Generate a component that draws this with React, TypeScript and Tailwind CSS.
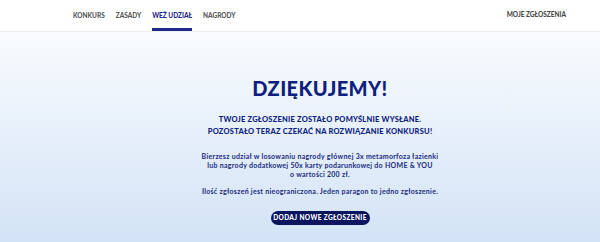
import React from 'react';

const navItems = [
  { label: 'KONKURS', active: false },
  { label: 'ZASADY', active: false },
  { label: 'WEŻ UDZIAŁ', active: true },
  { label: 'NAGRODY', active: false },
];

export default function App() {
  return (
    <div
      className="w-[600px] h-[242px] overflow-hidden flex flex-col bg-gradient-to-b from-white to-[#d3e3f6]"
      style={{ fontFamily: 'Lato, "Noto Sans", sans-serif' }}
    >
      {/* Top navigation */}
      <nav className="h-[32px] shrink-0 bg-white border-b border-[#eeeeee] flex items-stretch justify-between pl-[73px] pr-[34px]">
        <ul className="flex items-stretch gap-[11px]">
          {navItems.map((item) => (
            <li
              key={item.label}
              className={`flex items-center border-b-[3px] pt-[3px] text-[6.5px] font-black ${
                item.active ? 'border-[#1e2a8c] text-[#1e2a8c]' : 'border-transparent text-[#5a5a5a]'
              }`}
            >
              {item.label}
            </li>
          ))}
        </ul>
        <div className="flex items-center pb-[1px] text-[6.5px] font-black text-[#4a4a4a]">
          MOJE ZGŁOSZENIA
        </div>
      </nav>

      {/* Confirmation */}
      <main className="flex flex-col items-center text-center text-[#0f1f80] pt-[45px] pl-[40px]">
        <h1 className="text-[20px] leading-[22px] font-black tracking-[0.02em]">DZIĘKUJEMY!</h1>
        <p className="mt-[15px] text-[7.5px] leading-[12px] font-black tracking-[0.03em]">
          TWOJE ZGŁOSZENIE ZOSTAŁO POMYŚLNIE WYSŁANE.
          <br />
          POZOSTAŁO TERAZ CZEKAĆ NA ROZWIĄZANIE KONKURSU!
        </p>
        <p className="mt-[14px] text-[7px] leading-[9px] font-bold tracking-[0.04em] text-[#1a2a80]">
          Bierzesz udział w losowaniu nagrody głównej 3x metamorfoza łazienki
          <br />
          lub nagrody dodatkowej 50x karty podarunkowej do HOME &amp; YOU
          <br />o wartości 200 zł.
        </p>
        <p className="mt-[8px] text-[7px] leading-[9px] font-bold tracking-[0.04em] text-[#1a2a80]">
          Ilość zgłoszeń jest nieograniczona. Jeden paragon to jedno zgłoszenie.
        </p>
        <button
          type="button"
          className="mt-[15px] w-[99px] h-[14px] rounded-full bg-[#0a1560] text-white text-[6.5px] font-black tracking-[0.06em] flex items-center justify-center"
        >
          DODAJ NOWE ZGŁOSZENIE
        </button>
      </main>
    </div>
  );
}
